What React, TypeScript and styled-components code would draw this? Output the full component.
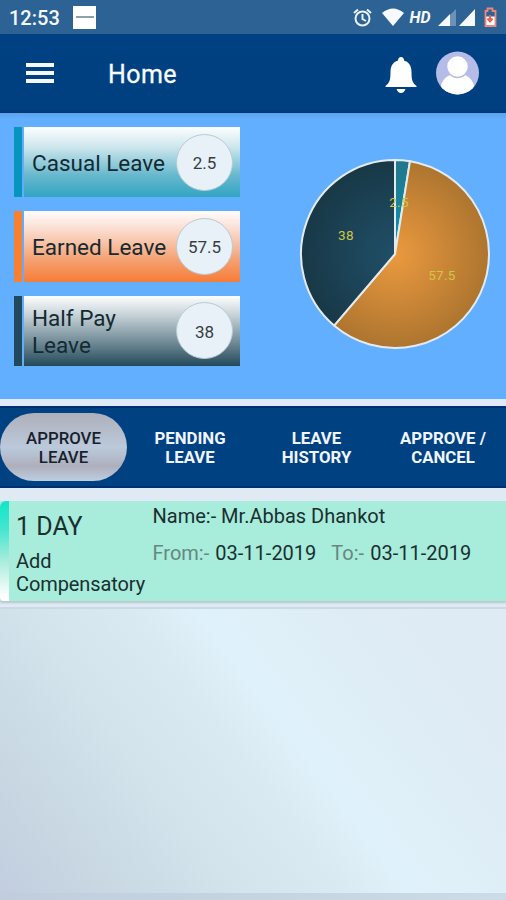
import React from "react";
import styled, { createGlobalStyle, css } from "styled-components";

const GlobalStyle = createGlobalStyle`
  * { box-sizing: border-box; }
  body { margin: 0; font-family: Roboto, "Liberation Sans", sans-serif; color: #1a2f30; }
`;

const Screen = styled.div`
  display: flex;
  flex-direction: column;
  width: 506px;
  height: 900px;
  overflow: hidden;
  background: #dfeaf4;
`;

const StatusBar = styled.div`
  display: flex;
  align-items: center;
  height: 34px;
  padding: 0 7px 0 9px;
  background: #2d6294;
  flex: none;
`;

const Clock = styled.span`
  width: 64px;
  font-size: 20px;
  font-weight: 500;
  line-height: 34px;
  padding-top: 2px;
  color: #f4f7fc;
`;

const AppBadge = styled.span`
  display: flex;
  align-items: center;
  justify-content: center;
  width: 23px;
  height: 23px;
  background: #fff;

  &::after {
    content: "";
    width: 18px;
    height: 2px;
    background: #8da0b1;
  }
`;

const StatusIcons = styled.svg`
  margin-left: auto;
`;

const Header = styled.header`
  display: flex;
  align-items: center;
  height: 79px;
  padding: 0 27px 0 26px;
  background: linear-gradient(#004183 0, #004080 74px, #003879 100%);
  flex: none;
`;

const MenuButton = styled.button`
  display: flex;
  flex-direction: column;
  justify-content: space-between;
  width: 28px;
  height: 20px;
  margin: -1px 54px 0 0;
  padding: 0;
  border: 0;
  background: none;
`;

const MenuLine = styled.span`
  height: 4px;
  background: #f7f8ff;
`;

const Title = styled.h1`
  margin: 3px auto 0 0;
  font-size: 25px;
  font-weight: 400;
  line-height: 30px;
  letter-spacing: 0.4px;
  color: #fafbff;
  -webkit-text-stroke: 0.3px #fafbff;
`;

const Bell = styled.svg`
  margin: 3px 19px 0 0;
`;

const Avatar = styled.svg`
  margin-top: -1px;
`;

const Summary = styled.section`
  display: flex;
  height: 286px;
  background: linear-gradient(#5ba3eb 0, #63afff 6px);
  flex: none;
`;

const Balances = styled.div`
  display: flex;
  flex-direction: column;
  gap: 14px;
  width: 226px;
  margin: 14px 57.5px 0 14px;
`;

const BalanceCard = styled.div<{ $accent: string; $fill: string }>`
  display: flex;
  align-items: center;
  height: 70.3px;
  padding: 0 7px 0 8px;
  border-left: 8px solid ${(p) => p.$accent};
  background: linear-gradient(#62adfd, #62adfd) 0 0 / 2px 100% no-repeat, ${(p) => p.$fill};
`;

const BalanceLabel = styled.span`
  flex: 1;
  padding: 2px 30px 0 2px;
  font-size: 22.5px;
  line-height: 27px;
  color: #142a32;
  margin-right: -30px;
`;

const BalanceCount = styled.span`
  display: flex;
  align-items: center;
  justify-content: center;
  flex: none;
  width: 57px;
  height: 57px;
  padding-top: 2px;
  border: 1px solid #b9cbd4;
  border-radius: 50%;
  background: #e8f1f7;
  font-size: 17px;
  color: #353d43;
`;

const Chart = styled.svg`
  margin-top: 43.5px;
`;

const Tabs = styled.nav`
  display: grid;
  grid-template-columns: 127px 126px 127px 126px;
  height: 82px;
  margin-top: 7px;
  padding: 6px 0 7px;
  border-top: 2px solid #002f70;
  border-bottom: 2px solid #002f70;
  background: #004182;
  flex: none;
`;

const Tab = styled.button<{ $active?: boolean }>`
  display: flex;
  align-items: center;
  justify-content: center;
  height: 68px;
  margin-top: -1px;
  padding: 2px 14px 0;
  border: 0;
  border-radius: 34px;
  background: none;
  font: 700 16.8px/19.5px Roboto, sans-serif;
  color: #f2f5ff;
  text-align: center;

  ${(p) =>
    p.$active &&
    css`
      background: linear-gradient(#aeafbb 0, #bbc9da 50%, #b6c2d2 60%, #aeafbc 78%, #bdcee0 100%);
      font-weight: 500;
      color: #17212d;
    `}
`;

const LeaveRow = styled.article`
  display: flex;
  height: 100px;
  margin-top: 13px;
  background: #a8ecdb;
  box-shadow: 0 2px 2px #b6c7cc;
  flex: none;

  &::before {
    content: "";
    width: 9px;
    border-radius: 6px 0 0 4px;
    background: linear-gradient(#12e5c7, #43e6d0 28%, #a3ecdb 58%, #fff 96%);
  }
`;

const LeaveType = styled.div`
  width: 136px;
  margin-right: 7.5px;
  padding: 11px 0 0 7px;
`;

const Duration = styled.div`
  font-size: 25px;
  line-height: 30px;
  margin-bottom: 8px;
`;

const Reason = styled.div`
  font-size: 20px;
  line-height: 23px;
  letter-spacing: -0.1px;
`;

const Details = styled.div`
  padding-top: 3px;
  font-size: 20px;
  line-height: 24px;
  white-space: nowrap;
`;

const Dates = styled.div`
  display: flex;
  gap: 15px;
  margin-top: 13px;
  word-spacing: 1.2px;
`;

const Caption = styled.span`
  color: #65877f;
`;

const Empty = styled.main`
  height: 286px;
  margin-top: 6px;
  border-top: 2px solid #cad9e4;
  background: linear-gradient(53deg, #c2cee0 0, #c8d7e2 14%, #d2e3ec 32%, #daeaf2 48%, #dff1fa 57%, #dff0f9 65%, #deecf5 77%, #dfebf4 100%);
  flex: none;
`;

const Footer = styled.footer`
  flex: 1;
  background: linear-gradient(90deg, #c1cddd, #cbdbe7);
`;

const balances = [
  { label: "Casual Leave", count: "2.5", accent: "#0795bd", fill: "linear-gradient(#fcfeff, #cee7ed 28%, #69b9ce 68%, #31a5c2)" },
  { label: "Earned Leave", count: "57.5", accent: "#f98031", fill: "linear-gradient(#fffdfc, #fadacb 28%, #f5a273 68%, #f67c37)" },
  { label: "Half Pay Leave", count: "38", accent: "#20495d", fill: "linear-gradient(#fdfefe, #c5d1d6 28%, #6c8793 68%, #23495a)" },
];

const tabs = ["APPROVE LEAVE", "PENDING LEAVE", "LEAVE HISTORY", "APPROVE / CANCEL"];

const RADIUS = 94;
const slices = [
  { value: 2.5, fill: "url(#teal)", x: 4, y: -47 },
  { value: 57.5, fill: "url(#orange)", x: 47, y: 26 },
  { value: 38, fill: "url(#navy)", x: -49, y: -14 },
];
const total = slices.reduce((sum, s) => sum + s.value, 0);

function slicePath(index: number) {
  const before = slices.slice(0, index).reduce((sum, s) => sum + s.value, 0);
  const point = (v: number) => {
    const a = (v / total) * Math.PI * 2;
    return `${RADIUS * Math.sin(a)} ${-RADIUS * Math.cos(a)}`;
  };
  const value = slices[index].value;
  const large = value > total / 2 ? 1 : 0;
  return `M0 0L${point(before)}A${RADIUS} ${RADIUS} 0 ${large} 1 ${point(before + value)}Z`;
}

function SystemIcons() {
  return (
    <StatusIcons width="148" height="34" viewBox="0 0 148 34" fill="#f6f9fd">
      <g fill="none" stroke="#e9f1fa" strokeWidth="2">
        <circle cx="11.5" cy="18.5" r="7" />
        <path d="M11.5 14v5l3.5 2M3 13l4-3.5M20 13l-4-3.5" />
      </g>
      <path d="M31 13q11-9 22 0L42 26Z" />
      <text x="58.5" y="23" fontSize="17" fontWeight="700" fontStyle="italic" textLength="21" lengthAdjust="spacingAndGlyphs">HD</text>
      <path d="M105 9v17h-6V15Z" opacity=".32" />
      <path d="M87 26l12-12v12ZM108 26l16-17v17Z" />
      <path d="M134.500 16.500h10v9h-10Z" fill="#fff" />
      <path d="M136.500 8.500h5v2.500h3v15h-10v-15h2Z" fill="none" stroke="#ed877c" strokeWidth="1.8" />
      <path d="M139 15v6M136.500 18.500l2.500 3 2.500-3" fill="none" stroke="#e46458" strokeWidth="2" />
    </StatusIcons>
  );
}

function LeaveChart() {
  return (
    <Chart width="194" height="194" viewBox="-97 -97 194 194">
      <defs>
        <radialGradient id="teal" gradientUnits="userSpaceOnUse" cx="0" cy="0" r="94">
          <stop stopColor="#0794b8" /><stop offset="1" stopColor="#24768a" />
        </radialGradient>
        <radialGradient id="orange" gradientUnits="userSpaceOnUse" cx="0" cy="0" r="94">
          <stop stopColor="#ea9a3d" /><stop offset=".4" stopColor="#d38b39" /><stop offset="1" stopColor="#ad752f" />
        </radialGradient>
        <radialGradient id="navy" gradientUnits="userSpaceOnUse" cx="0" cy="0" r="94">
          <stop stopColor="#204f67" /><stop offset=".5" stopColor="#1c4458" /><stop offset="1" stopColor="#183846" />
        </radialGradient>
      </defs>
      {slices.map((s, i) => (
        <path key={s.value} d={slicePath(i)} fill={s.fill} stroke="#e5ebed" strokeWidth="2" strokeLinejoin="round" />
      ))}
      {slices.map((s) => (
        <text key={s.value} x={s.x} y={s.y} fontSize="13.5" letterSpacing=".3" textAnchor="middle" fill="#d0c643">
          {s.value}
        </text>
      ))}
    </Chart>
  );
}

export default function App() {
  return (
    <Screen>
      <GlobalStyle />
      <StatusBar>
        <Clock>12:53</Clock>
        <AppBadge />
        <SystemIcons />
      </StatusBar>
      <Header>
        <MenuButton aria-label="Menu">
          <MenuLine />
          <MenuLine />
          <MenuLine />
        </MenuButton>
        <Title>Home</Title>
        <Bell width="32" height="38" viewBox="0 0 32 38" fill="#fff">
          <path d="M16 1c2 0 3 1.200 3 3.500 5 1.500 7.500 5.500 7.500 11.500 0 8 1 11 5 14v1H.5v-1c4-3 5-6 5-14C5.500 10 8 6 13 4.500 13 2.200 14 1 16 1ZM11.500 33h9q-1.500 4-4.500 4t-4.500-4Z" />
        </Bell>
        <Avatar width="43" height="44" viewBox="0 0 43 44">
          <defs>
            <clipPath id="avatar"><circle cx="21.500" cy="22" r="21.500" /></clipPath>
          </defs>
          <g clipPath="url(#avatar)">
            <path fill="#b5bce7" d="M0 0h43v44H0z" />
            <path fill="#fff" d="M4 39c1-8 5-13 10-15h15c5 2 9 7 10 15v5H4Z" />
            <circle cx="21.500" cy="15.500" r="11" fill="#fff" stroke="#b5bce7" strokeWidth="1.500" />
          </g>
        </Avatar>
      </Header>
      <Summary>
        <Balances>
          {balances.map((b) => (
            <BalanceCard key={b.label} $accent={b.accent} $fill={b.fill}>
              <BalanceLabel>{b.label}</BalanceLabel>
              <BalanceCount>{b.count}</BalanceCount>
            </BalanceCard>
          ))}
        </Balances>
        <LeaveChart />
      </Summary>
      <Tabs>
        {tabs.map((t, i) => (
          <Tab key={t} $active={i === 0}>{t}</Tab>
        ))}
      </Tabs>
      <LeaveRow>
        <LeaveType>
          <Duration>1 DAY</Duration>
          <Reason>Add Compensatory</Reason>
        </LeaveType>
        <Details>
          <div>Name:- Mr.Abbas Dhankot</div>
          <Dates>
            <span><Caption>From:-</Caption> 03-11-2019</span>
            <span><Caption>To:-</Caption> 03-11-2019</span>
          </Dates>
        </Details>
      </LeaveRow>
      <Empty />
      <Footer />
    </Screen>
  );
}
